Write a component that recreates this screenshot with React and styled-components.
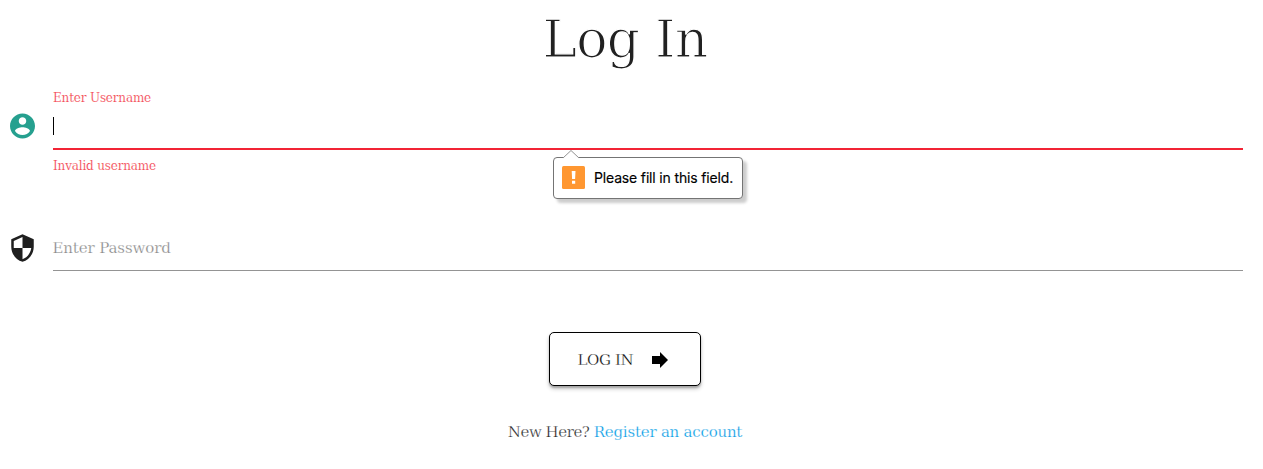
import React from "react";
import styled, { createGlobalStyle } from "styled-components";

const GlobalStyle = createGlobalStyle`
  *, *::before, *::after { box-sizing: border-box; }
  body {
    margin: 0;
    background: #fff;
    color: rgba(0, 0, 0, 0.87);
    font: 15px/22px "DejaVu Serif", serif;
    overflow: hidden;
  }
`;

const Page = styled.main`
  height: 469px;
  padding: 9px 20px 0 10px;
  display: flex;
  flex-direction: column;
`;

const Title = styled.h1`
  margin: 0 3px 23px 0;
  align-self: center;
  font-size: 52px;
  line-height: 60px;
  font-weight: 400;
  letter-spacing: -0.8px;
  white-space: nowrap;
  -webkit-text-stroke: 1.25px #fff;
`;

const Field = styled.div`
  display: grid;
  grid-template-columns: 25px 1fr;
  column-gap: 18px;
`;

const FieldIcon = styled.svg`
  width: 30px;
  height: 30px;
  margin: ${(p) => p.$top}px 0 0 -3px;
  fill: ${(p) => p.$color};
`;

const Control = styled.div`
  display: flex;
  flex-direction: column;
`;

const Label = styled.label`
  height: 12px;
  font-size: 12px;
  line-height: 12px;
  letter-spacing: -0.17px;
  color: #f2303c;
  white-space: nowrap;
  -webkit-text-stroke: 0.2px #fff;
`;

const InputLine = styled.div`
  position: relative;
  height: 46px;
  padding-top: 13px;
  border-bottom: 2px solid #f22435;
`;

const Caret = styled.div`
  width: 1px;
  height: 18px;
  background: #000;
`;

const HelperText = styled(Label)`
  margin-top: 10px;
`;

const PasswordLine = styled.div`
  height: 46px;
  padding-top: 12px;
  border-bottom: 1px solid #949494;
  color: #858585;
  letter-spacing: -0.12px;
  text-indent: -0.5px;
  -webkit-text-stroke: 0.25px #fff;
`;

const Tooltip = styled.div`
  position: absolute;
  z-index: 1;
  left: 500px;
  top: 53px;
  width: 190px;
  height: 42px;
  padding: 0 0 1px 8px;
  display: flex;
  align-items: center;
  gap: 9px;
  background: #fff;
  border: 1px solid #747474;
  border-radius: 4px;
  box-shadow: 4px 4px 3px rgba(0, 0, 0, 0.2);
  color: #000;
  font: 14px/20px Inter, sans-serif;
  white-space: nowrap;
`;

const Pointer = styled.svg`
  position: absolute;
  left: 8px;
  top: -8px;
  width: 18px;
  height: 9px;
`;

const Warning = styled.svg`
  width: 23px;
  height: 23px;
  flex: none;
`;

const TooltipText = styled.span`
  padding-top: 1px;
  letter-spacing: -0.16px;
  -webkit-text-stroke: 0.15px #000;
`;

const PasswordField = styled(Field)`
  margin-top: 53px;
`;

const Submit = styled.button`
  align-self: center;
  margin: 61px 4px 0 0;
  width: 152px;
  height: 54px;
  padding: 1px 0 0 28px;
  display: flex;
  align-items: center;
  gap: 18px;
  border: 1px solid #000;
  border-radius: 5px;
  background: #fff;
  box-shadow: 0 2px 2px rgba(0, 0, 0, 0.22), 0 3px 4px rgba(0, 0, 0, 0.2);
  color: #000;
  font: 15px/22px "DejaVu Serif", serif;
`;

const SubmitText = styled.span`
  width: 56px;
  letter-spacing: -0.4px;
  text-align: left;
  white-space: nowrap;
  -webkit-text-stroke: 0.3px #fff;
`;

const Arrow = styled.svg`
  width: 16px;
  height: 16px;
  flex: none;
`;

const Signup = styled.p`
  margin: 35px 3px 0 0;
  align-self: center;
  letter-spacing: -0.45px;
  white-space: nowrap;
  -webkit-text-stroke: 0.25px #fff;
`;

const SignupLink = styled.a`
  color: #039be5;
  letter-spacing: -0.22px;
  text-decoration: none;
`;

export default function App() {
  return (
    <Page>
      <GlobalStyle />
      <Title>Log In</Title>
      <Field>
        <FieldIcon viewBox="-0.4 0 24 24" $top={19} $color="#26a08f">
          <path d="M12 2C6.48 2 2 6.48 2 12s4.48 10 10 10 10-4.48 10-10S17.52 2 12 2zm0 3c1.66 0 3 1.34 3 3s-1.34 3-3 3-3-1.34-3-3 1.34-3 3-3zm0 14.2c-2.5 0-4.71-1.28-6-3.22.03-1.99 4-3.08 6-3.08 1.99 0 5.97 1.09 6 3.08-1.29 1.94-3.5 3.22-6 3.22z" />
        </FieldIcon>
        <Control>
          <Label>Enter Username</Label>
          <InputLine>
            <Caret />
            <Tooltip>
              <Pointer viewBox="0 0 18 9">
                <path d="M1 9V8L9 0.5L17 8V9Z" fill="#fff" />
                <path d="M1 8L9 0.5L17 8" fill="none" stroke="#929292" />
              </Pointer>
              <Warning viewBox="0 0 23 23">
                <rect width="23" height="23" rx="1.5" fill="#ff9731" />
                <path d="M9.7 5h3.8l-.4 8h-3zM10 14.7h3.2v3H10z" fill="#fff" />
              </Warning>
              <TooltipText>Please fill in this field.</TooltipText>
            </Tooltip>
          </InputLine>
          <HelperText as="span">Invalid username</HelperText>
        </Control>
      </Field>
      <PasswordField>
        <FieldIcon viewBox="-0.4 0 24 24" $top={8} $color="#1f1f1f">
          <path d="M12 1L3 5v6c0 5.55 3.84 10.74 9 12 5.16-1.26 9-6.45 9-12V5l-9-4zm0 10.99h7c-.53 4.12-3.28 7.79-7 8.94V12H5V6.3l7-3.11v8.8z" />
        </FieldIcon>
        <PasswordLine>Enter Password</PasswordLine>
      </PasswordField>
      <Submit>
        <SubmitText>LOG IN</SubmitText>
        <Arrow viewBox="0 0 16 16">
          <path d="M0 4h8V0l8 8-8 8v-4H0z" />
        </Arrow>
      </Submit>
      <Signup>
        New Here? <SignupLink href="#">Register an account</SignupLink>
      </Signup>
    </Page>
  );
}
